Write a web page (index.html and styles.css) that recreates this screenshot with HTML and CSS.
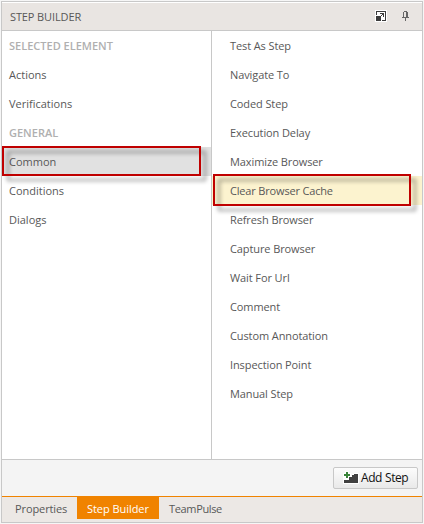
FILE: index.html
```html
<!DOCTYPE html>
<html lang="en">
<head>
<meta charset="utf-8">
<title>Step Builder</title>
<link rel="stylesheet" href="styles.css">
</head>
<body>
<main class="panel">
  <header class="header">
    <h1>STEP BUILDER</h1>
    <svg class="expand" width="12" height="12" viewBox="0 0 12 12" shape-rendering="crispEdges"><path fill="#fff" d="M0 0h12v12H0z"/><path fill="#3c3c3c" d="M1 1h10v10H7v-1h3V2H2v3H1zM1 6h5v5H1zM5 3h4v4H8V5H7V4H5zM6 5h1v1H6z"/></svg>
    <svg class="pin" width="7" height="10" viewBox="0 0 7 10" shape-rendering="crispEdges"><path fill="#666" d="M2 0h3v1H2zM1 1h1v5H1zM4 1h2v5H4zM0 6h7v1H0zM3 7h1v3H3z"/></svg>
  </header>
  <div class="columns">
    <ul class="list groups">
      <li class="heading">SELECTED ELEMENT</li>
      <li>Actions</li>
      <li>Verifications</li>
      <li class="heading">GENERAL</li>
      <li class="current">Common<span class="mark mark-group"></span></li>
      <li>Conditions</li>
      <li>Dialogs</li>
    </ul>
    <ul class="list steps">
      <li>Test As Step</li>
      <li>Navigate To</li>
      <li>Coded Step</li>
      <li>Execution Delay</li>
      <li>Maximize Browser</li>
      <li class="chosen">Clear Browser Cache<span class="mark mark-step"></span></li>
      <li>Refresh Browser</li>
      <li>Capture Browser</li>
      <li>Wait For Url</li>
      <li>Comment</li>
      <li>Custom Annotation</li>
      <li>Inspection Point</li>
      <li>Manual Step</li>
    </ul>
  </div>
  <div class="actions">
    <button class="add"><svg width="16" height="13" viewBox="0 0 16 13" shape-rendering="crispEdges"><path fill="#fff" d="M0 2h2V0h4v2h2v3h1V3h2V2h5v11H0z"/><path fill="#404040" d="M1 9h5V6h3V4h2V3h4v9H1z"/><path fill="#fff" d="M2 6h4v2H2z"/><path fill="#398439" d="M3 1h2v2h2v2H5v2H3V5H1V3h2z"/></svg><span>Add Step</span></button>
  </div>
  <nav class="tabs">
    <span class="tab properties">Properties</span>
    <span class="tab active">Step Builder</span>
    <span class="tab team">TeamPulse</span>
  </nav>
</main>
</body>
</html>
```
FILE: styles.css
```css
* { box-sizing: border-box; }
body {
  margin: 0;
  padding: 1px;
  background: #f6f6f6;
  color: #585858;
  font: 11px/15px "Open Sans", "Noto Sans", sans-serif;
}
.panel {
  width: 422px;
  height: 522px;
  display: flex;
  flex-direction: column;
  border: 1px solid #c8c8c8;
  background: #fff;
}
.header {
  height: 29px;
  display: flex;
  align-items: center;
  padding: 0 13px 0 8px;
  border-top: 1px solid #fff;
  border-bottom: 1px solid #c8c8c8;
  background: #e9e5e2;
}
h1 { margin: 0 auto 0 0; font-size: 11px; font-weight: 400; letter-spacing: -.12px; }
.expand { margin: 0 15px 1px 0; }
.pin { margin-bottom: 1px; }
.columns { height: 428px; display: grid; grid-template-columns: 209px 1fr; }
.list { margin: 0; padding: 0; list-style: none; }
.list li { position: relative; height: 29px; padding: 7px 0 7px 7px; white-space: nowrap; }
.list .heading { color: #b0b0b0; font-weight: 600; }
.steps { border-left: 1px solid #c8c8c8; letter-spacing: -.1px; }
.list.steps li { padding-left: 18px; }
.current { background: #e1e1e1; }
.list .chosen { background: #fcf3cf; letter-spacing: -.17px; }
.mark {
  position: absolute;
  z-index: 1;
  border: 2px solid #c00000;
  filter: drop-shadow(5px 5px 2px rgba(0, 0, 0, .42));
}
.mark-group { left: 0; top: -1px; width: 199px; height: 30px; }
.mark-step { left: 1px; top: -2px; width: 198px; height: 32px; }
.actions {
  height: 37px;
  display: flex;
  justify-content: flex-end;
  padding: 7px 4px 0 0;
  border-top: 1px solid #c8c8c8;
  background: #f4f4f4;
}
.add {
  width: 85px;
  height: 22px;
  display: flex;
  align-items: center;
  gap: 2px;
  padding: 0 0 0 9px;
  border: 1px solid #c8c8c8;
  border-radius: 2px;
  background: linear-gradient(#fcfcfc, #e9e9e9);
  color: #111;
  font: inherit;
  font-size: 12px;
  white-space: nowrap;
}
.add svg { margin-bottom: 2px; }
.add span { margin-bottom: 2px; letter-spacing: -.45px; word-spacing: .5px; }
.tabs {
  height: 26px;
  display: flex;
  border-top: 1px solid #f08300;
  background: #ece8e5;
}
.tab { height: 22px; padding-top: 4px; white-space: nowrap; }
.properties { width: 75px; padding-left: 13px; letter-spacing: -.1px; }
.active { width: 82px; padding-left: 10px; background: #f08300; color: #fff; font-weight: 500; letter-spacing: -.05px; }
.team { padding-left: 10px; letter-spacing: -.35px; }
```
